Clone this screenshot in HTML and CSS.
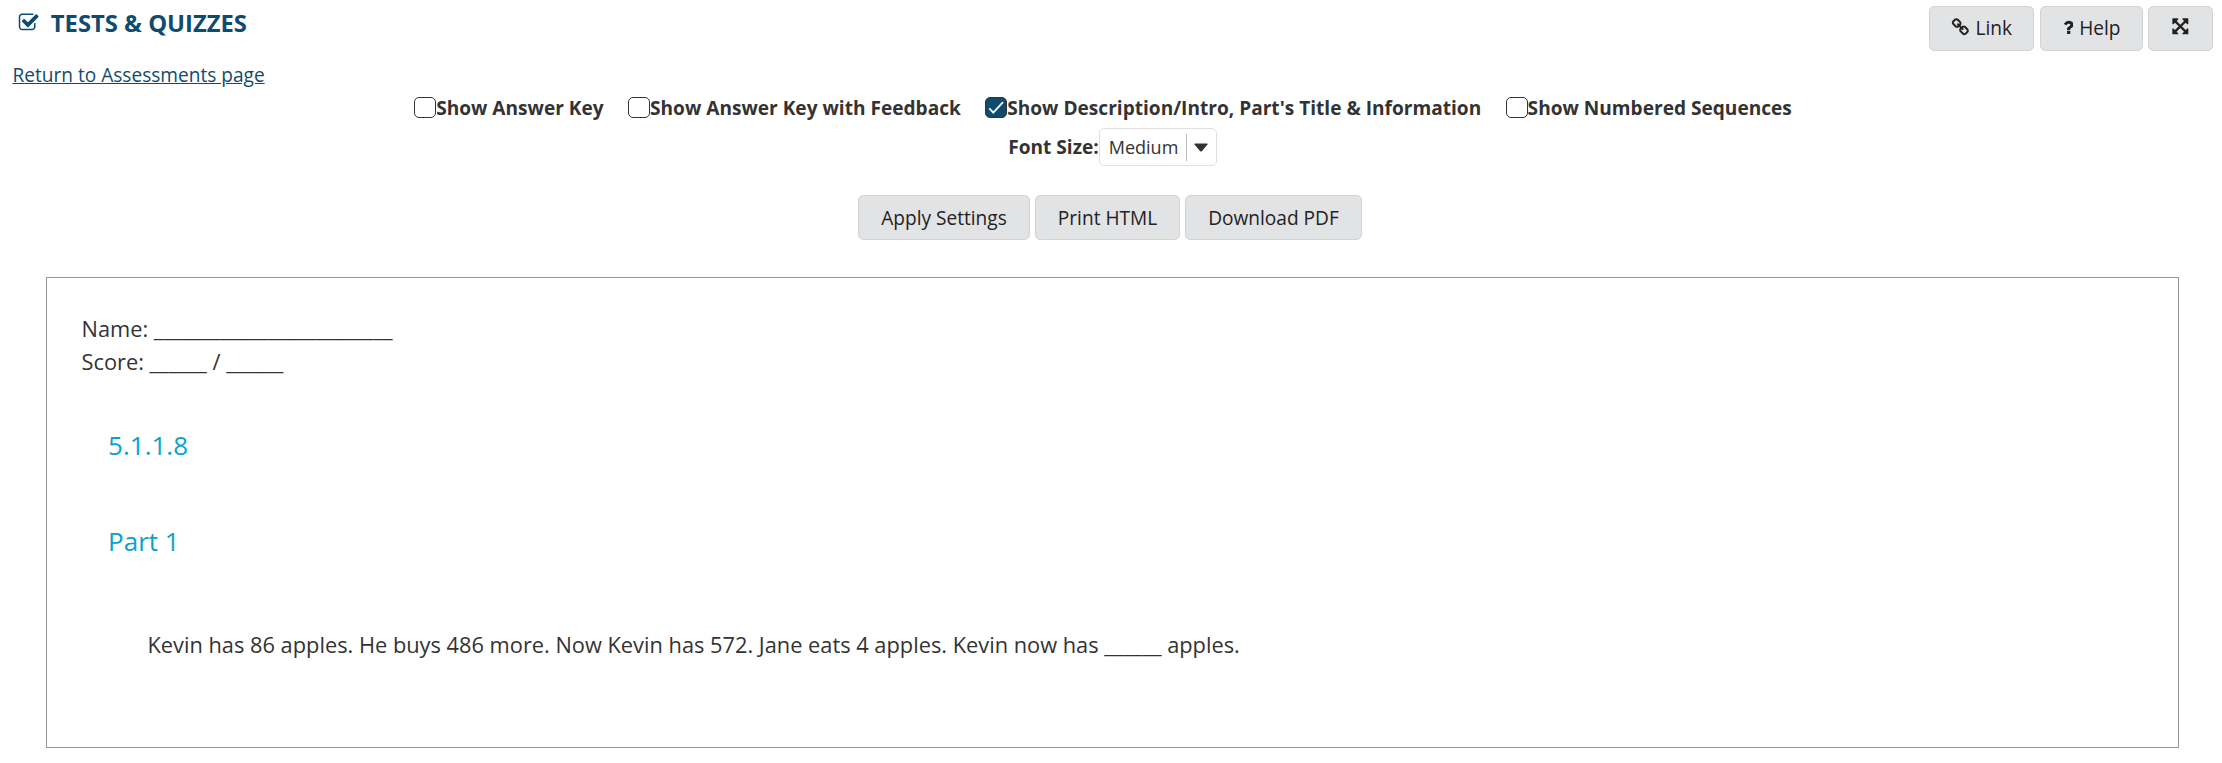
FILE: index.html
```html
<!DOCTYPE html>
<html lang="en">
<head>
<meta charset="utf-8">
<title>Tests &amp; Quizzes</title>
<link rel="stylesheet" href="styles.css">
</head>
<body>
<header class="tool-header">
  <h1 class="tool-title">
    <svg class="title-icon" viewBox="0 0 1792 1792"><path d="M1472 930v318q0 119-84.5 203.5t-203.5 84.5h-832q-119 0-203.5-84.5t-84.5-203.5v-832q0-119 84.5-203.5t203.5-84.5h832q63 0 117 25 15 7 18 23 3 17-9 29l-49 49q-10 10-23 10-3 0-9-2-23-6-45-6h-832q-66 0-113 47t-47 113v832q0 66 47 113t113 47h832q66 0 113-47t47-113v-254q0-13 9-22l64-64q10-10 23-10 6 0 12 3 20 8 20 29zm231-489l-814 814q-24 24-57 24t-57-24l-430-430q-24-24-24-57t24-57l110-110q24-24 57-24t57 24l263 263 647-647q24-24 57-24t57 24l110 110q24 24 24 57t-24 57z"/></svg>
    <span>TESTS &amp; QUIZZES</span>
  </h1>
  <nav class="tool-actions">
    <button class="btn btn-link"><svg class="icon" viewBox="0 0 1792 1792"><path d="M1520 1216q0-40-28-68l-208-208q-28-28-68-28-42 0-72 32 3 3 19 18.5t21.5 21.5 15 19 13 25.5 3.5 27.5q0 40-28 68t-68 28q-15 0-27.5-3.5t-25.5-13-19-15-21.5-21.5-18.5-19q-33 31-33 73 0 40 28 68l206 207q27 27 68 27 40 0 68-26l147-146q28-28 28-67zm-703-705q0-40-28-68l-206-207q-28-28-68-28-39 0-68 27l-147 146q-28 28-28 67 0 40 28 68l208 208q27 27 68 27 42 0 72-31-3-3-19-18.5t-21.5-21.5-15-19-13-25.5-3.5-27.5q0-40 28-68t68-28q15 0 27.5 3.5t25.5 13 19 15 21.5 21.5 18.5 19q33-31 33-73zm895 705q0 120-85 203l-147 146q-83 83-203 83-121 0-204-85l-206-207q-83-83-83-203 0-123 88-209l-88-88q-86 88-208 88-120 0-204-84l-208-208q-84-84-84-204t85-203l147-146q83-83 203-83 121 0 204 85l206 207q83 83 83 203 0 123-88 209l88 88q86-88 208-88 120 0 204 84l208 208q84 84 84 204z"/></svg><span>Link</span></button>
    <button class="btn btn-help"><svg class="icon icon-question" viewBox="384 0 1024 1792"><path d="M1088 1256v240q0 16-12 28t-28 12h-240q-16 0-28-12t-12-28v-240q0-16 12-28t28-12h240q16 0 28 12t12 28zm316-600q0 54-15.5 101t-35 76.5-55 59.5-57.5 43.5-61 35.5q-41 23-68.5 65t-27.5 67q0 17-12 32.5t-28 15.5h-240q-15 0-25.5-18.5t-10.5-37.5v-45q0-83 65-156.5t143-108.5q59-27 84-56t25-76q0-42-46.5-74t-107.5-32q-65 0-108 29-35 25-107 115-13 16-31 16-12 0-25-8l-164-125q-13-10-15.5-25t5.5-28q160-266 464-266 80 0 161 31t146 83 106 127.5 41 158.5z"/></svg><span>Help</span></button>
    <button class="btn btn-expand" aria-label="Full screen"><svg class="icon icon-expand" viewBox="0 0 1792 1792"><path d="M1411 541l-355 355 355 355 144-144q29-31 70-14 39 17 39 59v448q0 26-19 45t-45 19h-448q-42 0-59-40-17-39 14-69l144-144-355-355-355 355 144 144q31 30 14 69-17 40-59 40h-448q-26 0-45-19t-19-45v-448q0-42 40-59 39-17 69 14l144 144 355-355-355-355-144 144q-19 19-45 19-12 0-24-5-40-17-40-59v-448q0-26 19-45t45-19h448q42 0 59 40 17 39-14 69l-144 144 355 355 355-355-144-144q-31-30-14-69 17-40 59-40h448q26 0 45 19t19 45v448q0 42-39 59-13 5-25 5-26 0-45-19z"/></svg></button>
  </nav>
</header>
<a class="return-link" href="#">Return to Assessments page</a>
<section class="settings">
  <div class="options">
    <label class="option"><span class="check"></span>Show Answer Key</label>
    <label class="option"><span class="check"></span>Show Answer Key with Feedback</label>
    <label class="option"><span class="check checked"><svg viewBox="0 0 22 21"><path d="M4.3 11.4l4 4.2L18 5.2"/></svg></span>Show Description/Intro, Part's Title &amp; Information</label>
    <label class="option"><span class="check"></span>Show Numbered Sequences</label>
  </div>
  <div class="font-size">
    <span class="font-label">Font Size:</span>
    <div class="select"><span class="select-value">Medium</span><i class="divider"></i><svg class="caret" viewBox="0 0 14 9"><path d="M1 .5h12q1 0 .5 1L8 8Q7 9 6 8L.5 1.5Q0 .5 1 .5z"/></svg></div>
  </div>
  <div class="buttons">
    <button class="btn btn-apply">Apply Settings</button>
    <button class="btn btn-print">Print HTML</button>
    <button class="btn btn-download">Download PDF</button>
  </div>
</section>
<main class="paper">
  <p class="field">Name: _________________________</p>
  <p class="field">Score: ______ / ______</p>
  <h2 class="heading">5.1.1.8</h2>
  <h2 class="heading part">Part 1</h2>
  <p class="question">Kevin has 86 apples. He buys 486 more. Now Kevin has 572. Jane eats 4 apples. Kevin now has ______ apples.</p>
</main>
</body>
</html>
```
FILE: styles.css
```css
* { box-sizing: border-box; }
body {
  margin: 0;
  background: #fff;
  color: #333;
  font-family: "Open Sans", "Noto Sans", sans-serif;
  font-size: 19.1px;
  line-height: 26px;
}
.tool-header {
  display: flex;
  justify-content: space-between;
  align-items: flex-start;
  height: 62px;
  padding: 6px 9px 0 18px;
}
.tool-title {
  display: flex;
  gap: 11.5px;
  margin: 0;
  color: #0f4b6f;
  font-size: 23.8px;
  font-weight: 700;
  line-height: 34px;
}
.title-icon { width: 21.33px; height: 21.33px; margin-top: 5.7px; fill: currentColor; }
.tool-actions { display: flex; }
.btn {
  display: flex;
  align-items: center;
  justify-content: center;
  height: 45px;
  padding: 0;
  border: 1px solid #d0d2d4;
  border-radius: 5.33px;
  background: #e2e3e5;
  color: #222;
  font: inherit;
  white-space: nowrap;
}
.btn-link { width: 105px; margin-right: 6px; padding-bottom: 1px; }
.btn-help { width: 103px; margin-right: 5px; padding-bottom: 1px; }
.btn-expand { width: 65px; }
.icon { width: 18.667px; height: 18.667px; margin: 0 6px 1px 0; fill: currentColor; }
.icon-question { width: 10.667px; }
.icon-expand { margin: 0 0 3.5px; }
.return-link {
  display: block;
  width: max-content;
  margin-left: 12.4px;
  color: #0f4b6f;
  text-underline-offset: 1px;
}
.settings { display: flex; flex-direction: column; align-items: center; }
.options { display: flex; gap: 24.4px; height: 40px; padding-top: 7px; margin-right: 16px; font-weight: 700; }
.option { display: flex; }
.check {
  width: 22px;
  height: 21px;
  margin-top: 2px;
  border: 1px solid #333;
  border-radius: 5px;
}
.checked { background: #0f4b6f; }
.checked svg { display: block; width: 22px; height: 21px; margin: -1px; fill: none; stroke: #fff; stroke-width: 1.8; }
.font-size { display: flex; align-items: center; height: 38px; margin-left: 3px; }
.font-label { font-weight: 700; }
.select {
  display: flex;
  align-items: center;
  width: 118px;
  height: 38px;
  padding-left: 9px;
  border: 1px solid #e0e0e0;
  border-radius: 5px;
}
.select-value { font-size: 18px; }
.divider { width: 1px; height: 27px; margin-left: 8px; background: #bbb; }
.caret { width: 14px; height: 9px; margin-left: 7px; fill: #333; }
.buttons { display: flex; gap: 5px; margin: 29px 2px 0 0; }
.btn-apply { width: 172px; }
.btn-print { width: 145px; }
.btn-download { width: 177px; }
.paper {
  width: 2133px;
  height: 471px;
  margin: 37px 0 0 46px;
  padding: 34px 35px 0 34.5px;
  border: 1px solid #999;
  font-size: 21.81px;
  line-height: 33.33px;
}
.paper p { margin: 0; }
.heading {
  margin: 47px 0 0 26.6px;
  color: #0aa2cc;
  font-size: 26px;
  font-weight: 400;
  line-height: 38px;
}
.heading.part { margin-top: 58px; }
.paper .question { margin: 68px 0 0 66px; }
```
